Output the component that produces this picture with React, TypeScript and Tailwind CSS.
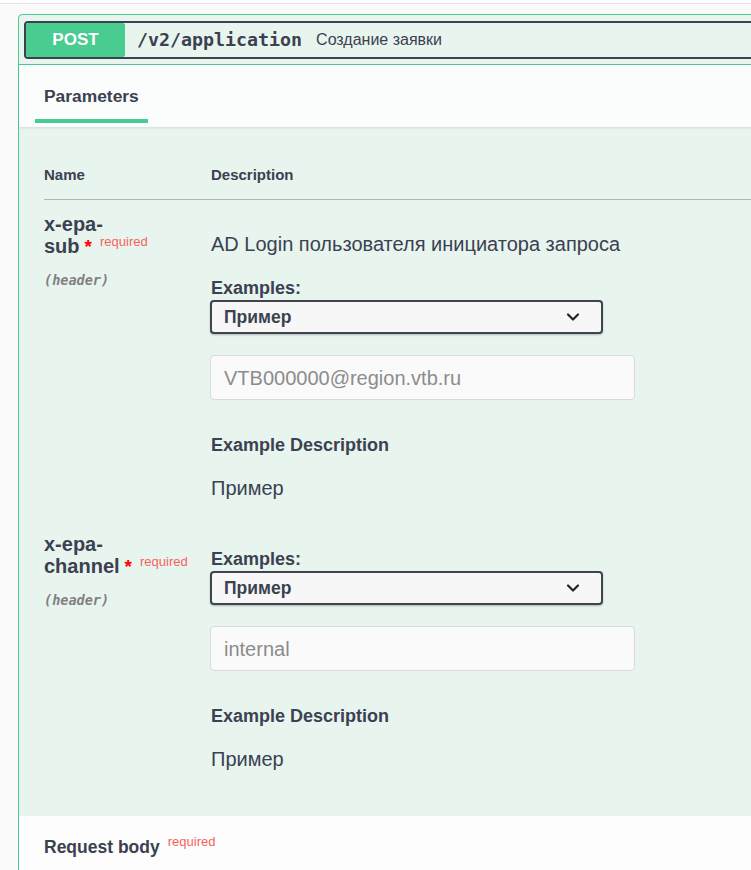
import { ChevronDown } from 'lucide-react';

interface ParamRowProps {
  first: string;
  second: string;
  description?: string;
  placeholder: string;
}

function ParamRow({ first, second, description, placeholder }: ParamRowProps) {
  return (
    <div className="flex pb-[20px]">
      {/* Name column */}
      <div className="w-[167px] shrink-0 pt-[13px]">
        <div className="text-[20px] font-bold leading-[22px] text-[#3b4151]">
          {first}
          <br />
          {second}
          <span className="ml-[5px] text-[19px] text-[#ff0000]">*</span>
          <span className="relative -top-[7px] ml-[8px] text-[13px] font-normal text-[#f66260]">required</span>
        </div>
        <div className="mt-[11px] font-['DejaVu_Sans_Mono',monospace] text-[13.5px] font-bold italic leading-[18px] text-[#808080]">
          (header)
        </div>
      </div>

      {/* Description column */}
      <div className="-ml-px flex-1">
        {description ? (
          <p className="ml-px mt-[32px] text-[20px] leading-[24px] text-[#3b4151]">{description}</p>
        ) : null}
        <div className={`${description ? 'mt-[21px]' : 'mt-[28px]'} ml-px text-[18px] font-bold leading-[22px] text-[#3b4151]`}>
          Examples:
        </div>
        <div className="mt-[1px] flex h-[34px] w-[393px] items-center justify-between rounded-[4px] border-2 border-[#41444e] bg-[#f7f7f7] pl-[12px] pr-[18px] shadow-[0_1px_2px_rgba(0,0,0,0.25)]">
          <span className="text-[17.5px] font-bold text-[#3b4151]">Пример</span>
          <ChevronDown size={20} strokeWidth={2.6} className="text-[#222]" />
        </div>
        <div className="mt-[21px] flex h-[45px] w-[425px] items-center rounded-[4px] border border-[#d9d9d9] bg-[#fafafa] pl-[13px]">
          <span className="text-[20px] text-[#8c8c8c]">{placeholder}</span>
        </div>
        <div className="ml-px mt-[34px] text-[18px] font-bold leading-[22px] text-[#3b4151]">Example Description</div>
        <div className="ml-px mt-[20px] text-[20px] leading-[24px] text-[#3b4151]">Пример</div>
      </div>
    </div>
  );
}

export default function App() {
  return (
    <div className="min-h-[870px] w-full overflow-hidden bg-[#fafafa] font-['Liberation_Sans',Arial,sans-serif]">
      <div className="h-[4px] border-b border-[#e3e3e3] bg-white" />

      <div className="pl-[18px] pt-[10px]">
        <div className="w-[800px] rounded-[4px] border border-[#49cc90] bg-[#e8f5ef]">
          {/* Summary */}
          <div className="border-b border-[#49cc90] px-[5px] pb-[5px] pt-[6px]">
            <div className="flex h-[38px] items-center rounded-[4px] border-2 border-[#3b4151]">
              <div className="flex h-full w-[99px] items-center justify-center rounded-[2px] bg-[#49cc90] text-[17px] font-bold text-white">
                POST
              </div>
              <span className="ml-[12px] font-['DejaVu_Sans_Mono',monospace] text-[18.3px] font-bold text-[#3b4151]">
                /v2/application
              </span>
              <span className="ml-[14px] text-[16px] text-[#3b4151]">Создание заявки</span>
            </div>
          </div>

          {/* Tab header */}
          <div className="flex h-[62px] items-end bg-[#fafdfb] pb-[4px] pl-[16px] shadow-[0_1px_2px_rgba(0,0,0,0.1)]">
            <div className="border-b-4 border-[#49cc90] px-[9px] pb-[13px] text-[17.4px] font-bold leading-[20px] text-[#3b4151]">
              Parameters
            </div>
          </div>

          {/* Parameters table */}
          <div className="pb-[25px] pl-[25px]">
            <div className="flex border-b border-[#aeb9b4] pb-[14px] pt-[38px] text-[15px] font-bold leading-[20px] text-[#3b4151]">
              <div className="w-[167px]">Name</div>
              <div>Description</div>
            </div>
            <ParamRow
              first="x-epa-"
              second="sub"
              description="AD Login пользователя инициатора запроса"
              placeholder="VTB000000@region.vtb.ru"
            />
            <ParamRow first="x-epa-" second="channel" placeholder="internal" />
          </div>

          {/* Request body */}
          <div className="h-[60px] bg-[#fcfdfc] pl-[25px] pt-[20px]">
            <span className="text-[17.5px] font-bold leading-[20px] text-[#3b4151]">Request body</span>
            <span className="relative -top-[7px] ml-[8px] text-[13px] text-[#f66260]">required</span>
          </div>
        </div>
      </div>
    </div>
  );
}
